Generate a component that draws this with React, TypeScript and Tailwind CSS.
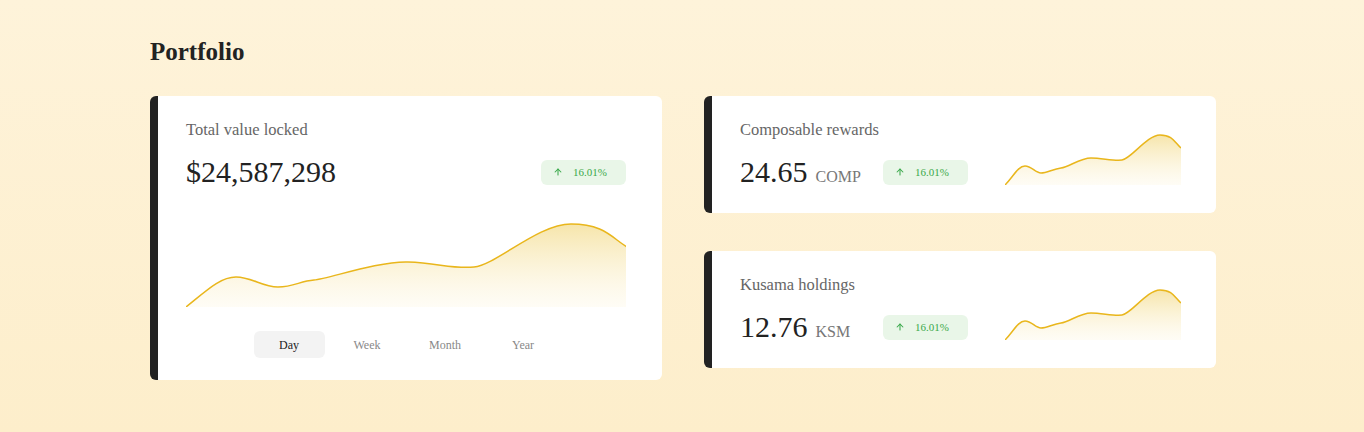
import { ArrowUp } from 'lucide-react';

const MAIN_LINE =
  'M0 84 C 20 68, 34 54, 50 54 S 76 64, 92 64 S 114 58, 128 57 S 192 38, 222 39 S 266 46, 288 44 S 352 1, 385 1 S 426 15, 441 24';
const SPARK_LINE =
  'M0 52 C 8 44, 13 33, 20 33 S 30 40, 36 40 S 48 36, 56 35 S 75 25, 86 25 S 108 28, 117 27 S 142 2, 155 2 S 170 10, 176 15';

function Badge() {
  return (
    <div className="flex items-center w-[85px] h-[25px] rounded-md bg-[#e9f6e8] text-[#3aa94b] pl-3">
      <ArrowUp size={10} strokeWidth={2.5} />
      <span className="ml-[10px] text-[11px] leading-none">16.01%</span>
    </div>
  );
}

function AreaChart({ id, d, w, h, className }: { id: string; d: string; w: number; h: number; className: string }) {
  return (
    <svg viewBox={`0 0 ${w} ${h}`} className={className} preserveAspectRatio="none">
      <defs>
        <linearGradient id={id} x1="0" y1="0" x2="0" y2="1">
          <stop offset="0%" stopColor="#f3dc8e" stopOpacity="0.75" />
          <stop offset="100%" stopColor="#fdf6df" stopOpacity="0.3" />
        </linearGradient>
      </defs>
      <path d={`${d} L ${w} ${h} L 0 ${h} Z`} fill={`url(#${id})`} />
      <path d={d} fill="none" stroke="#e9b61c" strokeWidth="1.5" />
    </svg>
  );
}

function SmallCard({ label, value, unit, id }: { label: string; value: string; unit: string; id: string }) {
  return (
    <div className="flex items-end justify-between bg-white rounded-md border-l-8 border-[#222] pl-7 pr-[35px] pt-6 pb-[23px]">
      <div>
        <div className="text-[16.5px] leading-5 text-[#666]">{label}</div>
        <div className="flex items-center mt-[14px] h-9">
          <div className="w-[143px] flex items-baseline">
            <span className="text-[30px] leading-9 text-[#222]">{value}</span>
            <span className="ml-2 text-base text-[#777]">{unit}</span>
          </div>
          <Badge />
        </div>
      </div>
      <AreaChart id={id} d={SPARK_LINE} w={176} h={52} className="w-[176px] h-[52px] mb-[5px]" />
    </div>
  );
}

export default function App() {
  const tabs = ['Day', 'Week', 'Month', 'Year'];
  return (
    <div className="h-[432px] bg-gradient-to-b from-[#fef3da] to-[#fdeecb] pl-[150px] pt-9 font-['Liberation_Serif',serif]">
      <h1 className="text-[25px] leading-8 font-semibold text-[#222]">Portfolio</h1>
      <div className="flex gap-[42px] mt-7">
        <div className="w-[512px] shrink-0 bg-white rounded-md border-l-8 border-[#222] pl-7 pr-9 pt-6 pb-[22px]">
          <div className="text-[16.5px] leading-5 text-[#666]">Total value locked</div>
          <div className="flex items-center justify-between mt-[14px] h-9">
            <span className="text-[30px] leading-9 text-[#222]">$24,587,298</span>
            <Badge />
          </div>
          <AreaChart id="main" d={MAIN_LINE} w={440} h={84} className="w-[440px] h-[84px] mt-[33px]" />
          <div className="flex justify-center gap-[7px] mt-6">
            {tabs.map((t, i) => (
              <div
                key={t}
                className={
                  i === 0
                    ? 'w-[71px] h-[27px] rounded-md bg-[#f3f3f3] flex items-center justify-center text-xs text-[#222]'
                    : 'w-[71px] h-[27px] rounded-md flex items-center justify-center text-xs text-[#888]'
                }
              >
                {t}
              </div>
            ))}
          </div>
        </div>
        <div className="w-[512px] shrink-0 flex flex-col gap-[38px]">
          <SmallCard label="Composable rewards" value="24.65" unit="COMP" id="s1" />
          <SmallCard label="Kusama holdings" value="12.76" unit="KSM" id="s2" />
        </div>
      </div>
    </div>
  );
}
